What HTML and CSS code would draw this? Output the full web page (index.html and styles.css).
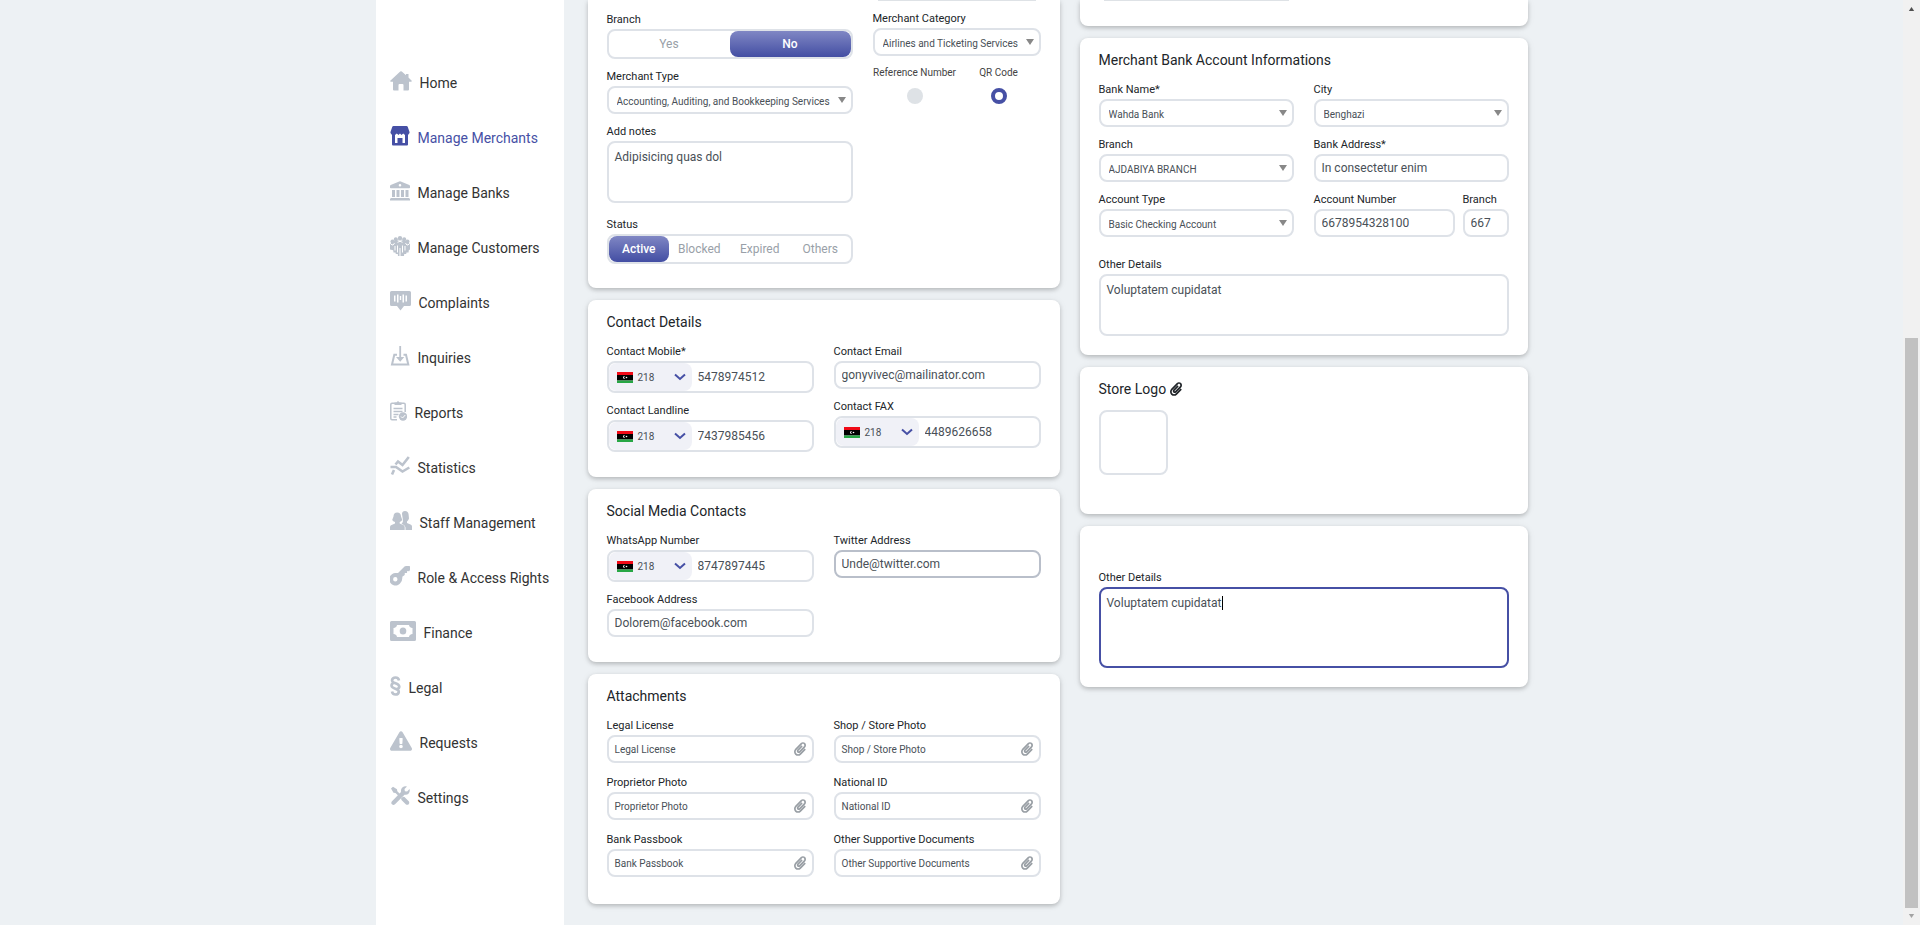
FILE: index.html
```html
<!DOCTYPE html>
<html lang="en">
<head>
<meta charset="utf-8">
<title>Manage Merchants</title>
<link rel="stylesheet" href="styles.css">
</head>
<body>
<svg class="sprite" aria-hidden="true">
  <symbol id="clip" viewBox="0 0 448 512"><path d="M43.246 466.142c-58.43-60.289-57.341-157.511 1.386-217.581L254.392 34c44.316-45.332 116.351-45.336 160.671 0 43.89 44.894 43.943 117.329 0 162.276L232.214 383.128c-29.855 30.537-78.633 30.111-107.982-.998-28.275-29.97-27.368-77.473 1.452-106.953l143.743-146.835c6.182-6.314 16.312-6.422 22.626-.241l22.861 22.379c6.315 6.182 6.422 16.312.241 22.626L171.427 319.927c-4.932 5.045-5.236 13.428-.648 18.292 4.372 4.634 11.245 4.711 15.688.165l182.849-186.851c19.613-20.062 19.613-52.725-.011-72.798-19.189-19.627-49.957-19.637-69.154 0L90.39 293.295c-34.763 35.56-35.299 93.12-1.191 128.313 34.01 35.093 88.985 35.137 123.058.286l172.06-175.999c6.177-6.319 16.307-6.433 22.626-.256l22.877 22.364c6.319 6.177 6.434 16.307.256 22.626l-172.06 175.998c-59.576 60.938-155.943 60.216-214.77-.485z"/></symbol>
  <symbol id="arrow" viewBox="0 0 8 6"><path d="M0 0h8L4 6z"/></symbol>
  <symbol id="chevron" viewBox="0 0 12 8"><path d="M1 1.5l5 4.5 5-4.5" fill="none" stroke="currentColor" stroke-width="2"/></symbol>
  <symbol id="flag" viewBox="0 0 16 11"><path fill="#f00a17" d="M0 0h16v3H0z"/><path fill="#000" d="M0 3h16v5.500H0z"/><path fill="#27a745" d="M0 8.500h16V11H0z"/><path d="M8.300 4.200a1.500 1.500 0 1 0 0 2.600 1.300 1.300 0 1 1 0-2.600z" fill="#fff"/><circle cx="9.500" cy="5.500" r=".8" fill="#fff"/></symbol>
</svg>
<div class="page">
  <nav class="sidebar" aria-label="Main">
    <a class="nav-item" href="#home"><svg width="22" height="20" viewBox="0 0 22 20"><path d="M10.200.5q.8-.7 1.600 0L16 4.300V3h2.500v3.600L22 10l-.8.800H19V18.500q0 1-1 1h-4.500V14q0-1-1-1h-3q-1 0-1 1v5.500H4q-1 0-1-1v-7.700H.8L0 10z"/></svg><span>Home</span></a>
    <a class="nav-item active" href="#merchants" aria-current="page"><svg width="20" height="20" viewBox="0 0 20 20"><path fill-rule="evenodd" d="M3.500 0h13q1 0 1.300 1L19.500 6v1l-1.500 2v9.500q0 1-1 1H3q-1 0-1-1V9L.5 7V6L2.200 1q.3-1 1.300-1zM5 9V17h2.500v-5h5v5H15V9l-1.800-1.500L11.500 9 10 7.500 8.500 9 6.800 7.500z"/></svg><span>Manage Merchants</span></a>
    <a class="nav-item" href="#banks"><svg width="20" height="20" viewBox="0 0 20 20"><path fill-rule="evenodd" d="M9.200.4q.8-.4 1.600 0L19.300 4q.7.400.7 1v1.500q0 .8-.8.800H.8Q0 7.300 0 6.500V5q0-.6.700-1zM10 3a1.300 1.300 0 1 0 0 2.600A1.300 1.300 0 0 0 10 3zM2 9h3v7H2zM6.500 9h3v7h-3zM11 9h3v7h-3zM15.500 9h3v7h-3zM1 17h18l1 1v1.500H0V18z"/></svg><span>Manage Banks</span></a>
    <a class="nav-item" href="#customers"><svg width="20" height="20" viewBox="0 0 20 20"><circle cx="10" cy="2.300" r="2.200"/><circle cx="5.800" cy="3.200" r="2"/><circle cx="14.200" cy="3.200" r="2"/><circle cx="2.400" cy="5.500" r="1.900"/><circle cx="17.600" cy="5.500" r="1.900"/><path d="M3 5l3-1 4 1 4-1 3 1 3 3.500v5l-1.200.8-.3 2.200h-2l-.3 1.500h-2l-.2 2H8l-.2-2h-2L5.500 16.500h-2l-.3-2.200L0 13.500v-5z"/><path class="cut" d="M1 8.300l2 .8 1.500-2M19 8.300l-2 .8-1.500-2M7.500 6.300l2.500-1 2.500 1M5 10v4.500M7.500 9.500v7M10 12v8M12.500 9.500v7M15 10v4.500"/></svg><span>Manage Customers</span></a>
    <a class="nav-item" href="#complaints"><svg width="21" height="20" viewBox="0 0 21 20"><path fill-rule="evenodd" d="M1.500 0h18Q21 0 21 1.500v12q0 1.500-1.500 1.500H14l-3.500 4.500L7 15H1.500Q0 15 0 13.500v-12Q0 0 1.500 0zM4 4.500v6h1.500v-6zM7 3.500v8h1.500v-8zM9.800 5v4h1.400V5zM12.500 3.500v8H14v-8zM15.500 4.500v6H17v-6z"/></svg><span>Complaints</span></a>
    <a class="nav-item" href="#inquiries"><svg width="20" height="20" viewBox="0 0 20 20"><path d="M9.300 0h1.800v11h3.200l-4.100 4.800L6 11h3.300z"/><path class="line" d="M7 8.800H4.300L2 18.600h16.300L16 8.800h-2.500"/></svg><span>Inquiries</span></a>
    <a class="nav-item" href="#reports"><svg width="17" height="20" viewBox="0 0 17 20"><path class="thin" d="M7 18.800H2Q.8 18.800.8 17.600V3.500Q.8 2.300 2 2.300h12q1.200 0 1.200 1.200V11M3.500 7.500h9M3.500 10.500h9M3.500 13.500h5M3.500 16h3"/><path d="M4.500 1.500h2Q8-.8 9.500 1.500h2V4h-7z"/><circle cx="13" cy="15.500" r="4.200"/><path class="cut" d="M11 15.500l1.500 1.500 2.800-3"/></svg><span>Reports</span></a>
    <a class="nav-item" href="#statistics"><svg width="20" height="20" viewBox="0 0 20 20"><path class="bold" d="M5.500 8.500L8 5.500l4.500 3.500L18.800 1M.5 11h5.500l6.500 4.500 6.800-4M2 18.500L4 14"/></svg><span>Statistics</span></a>
    <a class="nav-item" href="#staff"><svg width="22" height="20" viewBox="0 0 22 20"><path d="M12 3q0-2.700 3-2.900 3.300 0 3.600 3.500l.4 4q-.6 2.200-2 3v1.500l4 1.600q1 .5 1 1.800V19h-6.500v-2.500q-.3-2-2.500-3l-1.500-.7q2-1.500 1.400-4z"/><path d="M3.500 5.500Q3.600 1.500 7.200 1.500T11 5.500L12.300 9q-1 1.700-2.600 2v1.500l4 1.800q1 .7 1 2V19H0v-2.700q0-1.300 1-2l4-1.800V11Q3 10.700 2.200 9z"/></svg><span>Staff Management</span></a>
    <a class="nav-item" href="#roles"><svg width="20" height="20" viewBox="0 0 20 20"><path fill-rule="evenodd" d="M14.500.6L16 0h3.400l.6.600V4l-.8 1.200-2-.2-.2 2-2.200.1-.1 2-2.400 1.600q.4 4.300-2.300 6.800A6.200 6.200 0 1 1 5.200 7.100l2.800-.2zM5.300 11a2.200 2.200 0 1 0 0 4.400 2.200 2.200 0 0 0 0-4.400z"/></svg><span>Role &amp; Access Rights</span></a>
    <a class="nav-item" href="#finance"><svg width="26" height="20" viewBox="0 0 26 20"><path fill-rule="evenodd" d="M1.500 0h23Q26 0 26 1.500v17q0 1.500-1.500 1.500h-23Q0 20 0 18.500v-17Q0 0 1.500 0zM7 4q-.3 2.700-3.500 3v6q3.200.3 3.500 3h12q.3-2.700 3.500-3V7Q19.300 6.700 19 4z"/><ellipse cx="13" cy="10" rx="3.300" ry="3.500"/></svg><span>Finance</span></a>
    <a class="nav-item" href="#legal"><svg width="11" height="20" viewBox="0 0 11 20"><path class="bold" d="M9 4.500Q8.500 1.500 5.500 1.500T2 4.200Q2 6 5.500 7.300T9.300 10.500Q9.300 12.500 7 13M3.800 7Q1.500 7.500 1.500 9.500T5.300 12.700 8.800 16Q8.500 18.500 5.500 18.500T2 15.500"/></svg><span>Legal</span></a>
    <a class="nav-item" href="#requests"><svg width="22" height="20" viewBox="0 0 576 512"><path d="M569.517 440.013C587.975 472.007 564.806 512 527.940 512H48.054c-36.937 0-59.999-40.055-41.577-71.987L246.423 23.985c18.467-32.009 64.720-31.951 83.154 0l239.940 416.028zM288 354c-25.405 0-46 20.595-46 46s20.595 46 46 46 46-20.595 46-46-20.595-46-46-46zm-43.673-165.346l7.418 136c.347 6.364 5.609 11.346 11.982 11.346h48.546c6.373 0 11.635-4.982 11.982-11.346l7.418-136c.375-6.874-5.098-12.654-11.982-12.654h-63.383c-6.884 0-12.356 5.780-11.981 12.654z"/></svg><span>Requests</span></a>
    <a class="nav-item" href="#settings"><svg width="20" height="20" viewBox="0 0 20 20"><path d="M1 2.500L3 .8l4 2.500.3 2L10 8 8.300 9.700 5.500 7l-2-.3zM11 12.500l2-1.800 1.500.3 4.500 4.500q.8 1.500-.3 2.700-1.200 1-2.700.3L11.500 14z"/><path d="M14 .5q1.500-.6 3 0L14.500 3l.4 2.200 2.200.4L19.500 3q.8 2.500-.8 4.500-1.700 1.700-4.200 1.200L5 18.300q-1.600 1.200-3 0t0-3L11 6Q10.500 2 14 .5z"/></svg><span>Settings</span></a>
  </nav>
  <main class="content">
    <div class="column">
      <section class="card card-first">
        <div class="split split-wide">
          <div class="stack stack-general">
            <div class="field">
              <span class="label" id="l-branch">Branch</span>
              <div class="segments" role="group" aria-labelledby="l-branch"><button type="button">Yes</button><button type="button" class="on" aria-pressed="true">No</button></div>
            </div>
            <div class="field">
              <label for="mtype">Merchant Type</label>
              <div class="select"><select id="mtype"><option>Accounting, Auditing, and Bookkeeping Services</option></select><svg><use href="#arrow"/></svg></div>
            </div>
            <div class="field">
              <label for="notes">Add notes</label>
              <textarea id="notes" class="notes">Adipisicing quas dol</textarea>
            </div>
            <div class="field field-status">
              <span class="label" id="l-status">Status</span>
              <div class="segments" role="group" aria-labelledby="l-status"><button type="button" class="on" aria-pressed="true">Active</button><button type="button">Blocked</button><button type="button">Expired</button><button type="button">Others</button></div>
            </div>
          </div>
          <div class="stack stack-category">
            <div class="field-end"></div>
            <div class="field">
              <label for="mcat">Merchant Category</label>
              <div class="select"><select id="mcat"><option>Airlines and Ticketing Services</option></select><svg><use href="#arrow"/></svg></div>
            </div>
            <div class="radios">
              <label>Reference Number<input type="radio" name="mode"></label>
              <label>QR Code<input type="radio" name="mode" checked></label>
            </div>
          </div>
        </div>
      </section>

      <section class="card">
        <h2>Contact Details</h2>
        <div class="split">
          <div class="stack">
            <div class="field"><label for="mobile">Contact Mobile*</label>
              <div class="phone"><button type="button" aria-label="Country code"><svg class="flag"><use href="#flag"/></svg>218<svg class="chevron"><use href="#chevron"/></svg></button><input id="mobile" type="tel" value="5478974512"></div></div>
            <div class="field"><label for="landline">Contact Landline</label>
              <div class="phone"><button type="button" aria-label="Country code"><svg class="flag"><use href="#flag"/></svg>218<svg class="chevron"><use href="#chevron"/></svg></button><input id="landline" type="tel" value="7437985456"></div></div>
          </div>
          <div class="stack">
            <div class="field"><label for="email">Contact Email</label><input id="email" class="box" type="text" value="gonyvivec@mailinator.com"></div>
            <div class="field"><label for="fax">Contact FAX</label>
              <div class="phone"><button type="button" aria-label="Country code"><svg class="flag"><use href="#flag"/></svg>218<svg class="chevron"><use href="#chevron"/></svg></button><input id="fax" type="tel" value="4489626658"></div></div>
          </div>
        </div>
      </section>

      <section class="card">
        <h2>Social Media Contacts</h2>
        <div class="split">
          <div class="stack">
            <div class="field"><label for="whatsapp">WhatsApp Number</label>
              <div class="phone"><button type="button" aria-label="Country code"><svg class="flag"><use href="#flag"/></svg>218<svg class="chevron"><use href="#chevron"/></svg></button><input id="whatsapp" type="tel" value="8747897445"></div></div>
            <div class="field"><label for="facebook">Facebook Address</label><input id="facebook" class="box" type="text" value="Dolorem@facebook.com"></div>
          </div>
          <div class="stack">
            <div class="field"><label for="twitter">Twitter Address</label><input id="twitter" class="box box-hover" type="text" value="Unde@twitter.com"></div>
          </div>
        </div>
      </section>

      <section class="card card-files">
        <h2>Attachments</h2>
        <div class="split">
          <div class="field"><span class="label">Legal License</span><button type="button" class="box file">Legal License<svg><use href="#clip"/></svg></button></div>
          <div class="field"><span class="label">Shop / Store Photo</span><button type="button" class="box file">Shop / Store Photo<svg><use href="#clip"/></svg></button></div>
          <div class="field"><span class="label">Proprietor Photo</span><button type="button" class="box file">Proprietor Photo<svg><use href="#clip"/></svg></button></div>
          <div class="field"><span class="label">National ID</span><button type="button" class="box file">National ID<svg><use href="#clip"/></svg></button></div>
          <div class="field"><span class="label">Bank Passbook</span><button type="button" class="box file">Bank Passbook<svg><use href="#clip"/></svg></button></div>
          <div class="field"><span class="label">Other Supportive Documents</span><button type="button" class="box file">Other Supportive Documents<svg><use href="#clip"/></svg></button></div>
        </div>
      </section>
    </div>

    <div class="column">
      <section class="card card-first card-tail">
        <div class="split"><div class="field-end"></div></div>
      </section>

      <section class="card card-tight">
        <h2>Merchant Bank Account Informations</h2>
        <div class="split">
          <div class="field"><label for="bank">Bank Name*</label>
            <div class="select"><select id="bank"><option>Wahda Bank</option></select><svg><use href="#arrow"/></svg></div></div>
          <div class="field"><label for="city">City</label>
            <div class="select"><select id="city"><option>Benghazi</option></select><svg><use href="#arrow"/></svg></div></div>
          <div class="field"><label for="branch">Branch</label>
            <div class="select"><select id="branch"><option>AJDABIYA BRANCH</option></select><svg><use href="#arrow"/></svg></div></div>
          <div class="field"><label for="address">Bank Address*</label><input id="address" class="box" type="text" value="In consectetur enim"></div>
          <div class="field"><label for="atype">Account Type</label>
            <div class="select"><select id="atype"><option>Basic Checking Account</option></select><svg><use href="#arrow"/></svg></div></div>
          <div class="account">
            <div class="field"><label for="number">Account Number</label><input id="number" class="box" type="text" value="6678954328100"></div>
            <div class="field"><label for="bcode">Branch</label><input id="bcode" class="box" type="text" value="667"></div>
          </div>
        </div>
        <div class="field field-details"><label for="details">Other Details</label><textarea id="details" class="notes">Voluptatem cupidatat</textarea></div>
      </section>

      <section class="card card-logo">
        <h2>Store Logo <svg><use href="#clip"/></svg></h2>
        <button type="button" class="logo-box" aria-label="Store logo"></button>
      </section>

      <section class="card card-tight card-untitled">
        <div class="field"><label for="more">Other Details</label>
          <div class="editing"><textarea id="more">Voluptatem cupidatat</textarea><i class="caret"></i></div></div>
      </section>
    </div>
  </main>
</div>
<div class="scrollbar" aria-hidden="true">
  <svg class="up"><use href="#arrow"/></svg>
  <div class="track"><div class="thumb"></div></div>
  <svg class="down"><use href="#arrow"/></svg>
</div>
</body>
</html>
```
FILE: styles.css
```css
* { box-sizing: border-box; }

body {
  margin: 0;
  height: 100vh;
  overflow: hidden;
  display: flex;
  background: #edf1f4;
  font-family: Roboto, "Liberation Sans", sans-serif;
  font-size: 12px;
  color: #212529;
}

button, input, select, textarea { font: inherit; color: #495057; margin: 0; }
button { cursor: pointer; }
svg { display: block; flex: none; fill: currentColor; }
.sprite { position: absolute; width: 0; height: 0; }

.page {
  flex: 1;
  display: flex;
  gap: 24px;
  max-width: 1152px;
  margin: 0 auto;
}

/* Sidebar */
.sidebar {
  flex: 0 0 188px;
  background: #fff;
  padding: 53px 14px 0;
}
.nav-item {
  display: flex;
  gap: 8px;
  height: 55px;
  align-items: center;
  color: #333;
  font-size: 14px;
  line-height: 20px;
  text-decoration: none;
  white-space: nowrap;
}
.nav-item span { padding-top: 4px; }
.nav-item svg { color: #bcc3cd; }
.nav-item.active, .nav-item.active svg { color: #4650a5; }
.line, .thin, .bold, .cut { fill: none; stroke: currentColor; stroke-width: 2; }
.thin { stroke-width: 1.5; }
.bold { stroke-width: 2.6; }
.cut { stroke: #fff; stroke-width: 1; }

/* Cards */
.content {
  flex: 1;
  display: grid;
  grid-template-columns: minmax(0, 472fr) minmax(0, 448fr);
  gap: 20px;
  align-items: start;
}
.column { display: flex; flex-direction: column; gap: 12px; }
.card {
  background: #fff;
  border-radius: 8px;
  padding: 12px 19px 25px;
  box-shadow: 0 2px 4px rgba(0, 0, 0, .2), 0 1px 10px rgba(0, 0, 0, .06);
}
.card-first { padding-top: 0; padding-bottom: 24px; border-radius: 0 0 8px 8px; }
.card-files { padding-bottom: 27px; }
.card-tight { padding-bottom: 19px; }
.card-untitled { padding-top: 43px; }
.card-logo { padding-bottom: 39px; }
h2 {
  display: flex;
  align-items: center;
  gap: 4px;
  margin: 0 0 11px;
  font-size: 14px;
  line-height: 20px;
  font-weight: 400;
}
h2 svg { width: 12px; height: 14px; }

.split {
  display: grid;
  grid-template-columns: minmax(0, 1fr) minmax(0, 1fr);
  gap: 9px 20px;
}
.card-files .split { row-gap: 11px; }
.split-wide { grid-template-columns: minmax(0, 246fr) minmax(0, 168fr); }
.stack { display: flex; flex-direction: column; gap: 9px; }
.stack-general { padding-top: 11px; }
.field { display: flex; flex-direction: column; gap: 1px; min-width: 0; }
.field-end { height: 1px; margin: 0 5px; background: #dee2e6; }
.field-status { padding-top: 4px; }
.field-details { padding-top: 19px; }
.card-tail { padding-bottom: 25px; }
label, .label { padding-top: 1px; font-size: 11px; line-height: 16px; white-space: nowrap; }

/* Controls */
.box, .select select, textarea, .phone, .segments, .logo-box {
  width: 100%;
  background: #fff;
  border: 2px solid #dee2e8;
  border-radius: 8px;
  outline: 0;
}
.box { height: 28px; padding: 0 6px; }
.box-hover { border-color: #b9bfca; }
textarea { display: block; resize: none; padding: 6px; line-height: 16px; }
.notes { height: 62px; }

.select { display: grid; grid-template-columns: minmax(0, 1fr); align-items: center; }
.select select {
  grid-area: 1 / 1;
  height: 28px;
  padding: 3px 16px 0 8px;
  appearance: none;
  font-size: 10px;
}
.select svg {
  grid-area: 1 / 1;
  justify-self: end;
  width: 8px;
  height: 6px;
  margin-right: 7px;
  color: #888;
  pointer-events: none;
}

.phone { display: flex; height: 32px; }
.phone button {
  display: flex;
  align-items: center;
  gap: 5px;
  flex: 0 0 83px;
  padding: 0 6px 0 8px;
  border: 0;
  border-radius: 8px;
  background: #f0f1f7;
  font-size: 10px;
}
.phone input { flex: 1; min-width: 0; border: 0; padding: 0 6px; outline: 0; background: none; }
.flag { width: 16px; height: 11px; }
.chevron { width: 12px; height: 8px; margin-left: auto; color: #4650a5; }

.segments { display: flex; height: 30px; }
.segments button { flex: 1; padding: 0; border: 0; border-radius: 8px; background: none; color: #999fa8; }
.segments .on {
  background: linear-gradient(#8087c4, #434ea3);
  color: #fff;
  font-weight: 500;
}

.radios { display: grid; grid-template-columns: minmax(0, 1fr) minmax(0, 1fr); }
.radios label {
  display: flex;
  flex-direction: column;
  align-items: center;
  gap: 7px;
  padding-top: 0;
  font-size: 10px;
  color: #444;
}
.radios input {
  appearance: none;
  width: 16px;
  height: 16px;
  border-radius: 50%;
  background: #dee2e6;
}
.radios input:checked { border: 4px solid #4650a5; background: #fff; }

.file { display: flex; align-items: center; justify-content: space-between; font-size: 10px; }
.file svg { width: 12px; height: 14px; color: #999fa5; }
.account { display: grid; grid-template-columns: minmax(0, 141fr) minmax(0, 46fr); gap: 8px; }
.logo-box { display: block; width: 69px; height: 65px; }

.editing { position: relative; }
.editing textarea { height: 81px; border-color: #4650a5; }
.caret {
  position: absolute;
  left: 123px;
  top: 9px;
  width: 1px;
  height: 14px;
  background: #000;
}

/* Scrollbar */
.scrollbar {
  flex: 0 0 17px;
  display: flex;
  flex-direction: column;
  align-items: center;
  justify-content: space-between;
  padding: 7px 0;
  background: #f1f1f1;
}
.scrollbar svg { width: 7px; height: 4px; }
.up { color: #505050; transform: rotate(180deg); }
.down { color: #a3a3a3; }
.track { flex: 1; display: flex; align-items: flex-end; padding: 6px 0; }
.thumb { width: 13px; height: 64%; background: #c1c1c1; }
```
